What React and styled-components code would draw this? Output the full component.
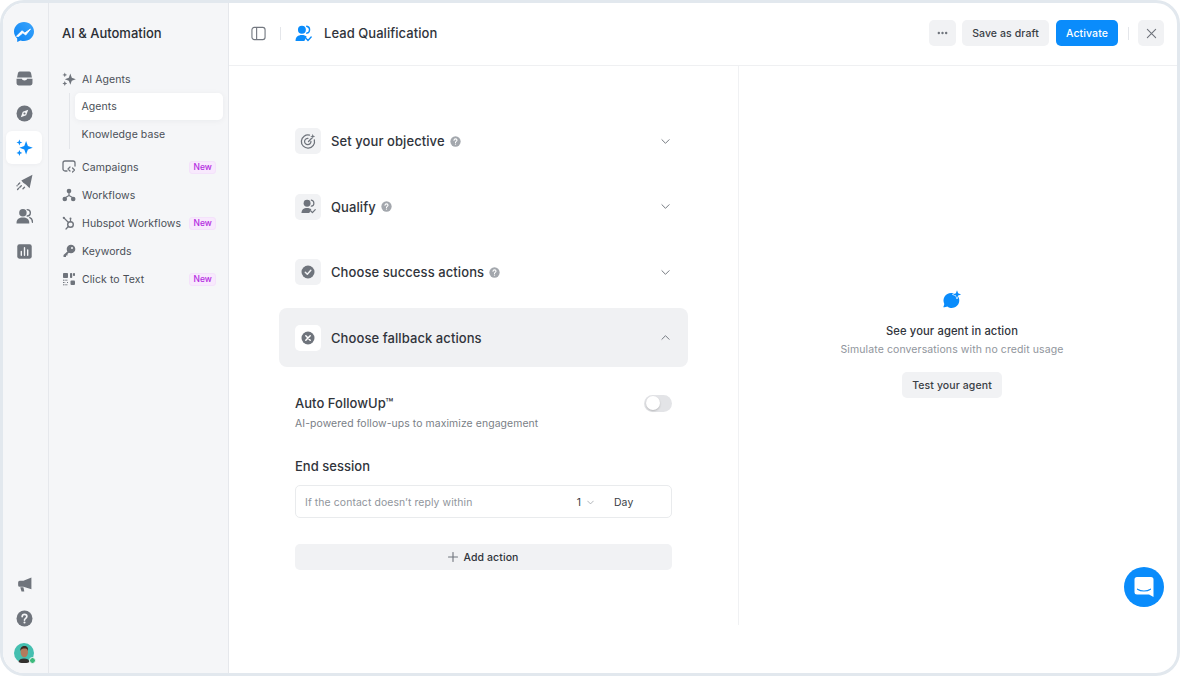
import React from "react";
import styled, { createGlobalStyle } from "styled-components";

const Global = createGlobalStyle`
  html, body { margin: 0; padding: 0; background: #fff; }
  body { font-family: Inter, "Liberation Sans", sans-serif; -webkit-font-smoothing: antialiased; }
  * { box-sizing: border-box; }
`;

const Frame = styled.div`
  position: relative; width: 1180px; height: 676px; display: flex; overflow: hidden;
  border: 3px solid #e2e8ee; border-radius: 24px; background: #fff; color: #23272e;
`;
const Rail = styled.nav`
  width: 46px; flex: none; background: #f5f6f8; border-right: 1px solid #e6e8ec;
  display: flex; flex-direction: column; align-items: center; padding: 19px 3px 10px 0;
`;
const RailLogo = styled.div`display: flex; height: 20px; align-items: center; justify-content: center; margin-bottom: 20px;`;
const RailGroup = styled.div`display: flex; flex-direction: column; gap: 1.5px;`;
const RailSpacer = styled.div`flex: 1;`;
const RailItem = styled.div`
  width: 36px; height: 33px; display: flex; align-items: center; justify-content: center; border-radius: 6px;
  background: ${p => (p.$active ? "#fff" : "transparent")};
  box-shadow: ${p => (p.$active ? "0 1px 4px rgba(20,30,50,.04)" : "none")};
`;
const Avatar = styled.div`position: relative; width: 20px; height: 20px; margin-top: 8px;`;
const Presence = styled.span`
  position: absolute; right: -2px; bottom: -1px; width: 7px; height: 7px; border-radius: 50%;
  background: #3cba7c; border: 1px solid #f5f6f8;
`;
const Sidebar = styled.aside`
  width: 180px; flex: none; background: #f5f6f8; border-right: 1px solid #e6e8ec; padding: 0 5px 0 13px;
`;
const SideTitle = styled.div`height: 62px; display: flex; align-items: center; padding-bottom: 3px; font-size: 13px; font-weight: 500; color: #2a2e35;`;
const NavRow = styled.div`
  height: 28px; display: flex; align-items: center; gap: 6px; font-size: 10.5px; color: #4a4f57; letter-spacing: .08px;
`;
const NavIcon = styled.span`width: 14px; height: 14px; flex: none; display: flex; align-items: center; justify-content: center;`;
const NavLabel = styled.span`flex: 1; white-space: nowrap;`;
const Badge = styled.span`
  margin-right: 7px; height: 13px; padding: 0 3px; border-radius: 3px; background: #f8e9fd; border: 1px solid #f4e2fb;
  color: #b32be0; font-size: 8.5px; font-weight: 500; line-height: 11px;
`;
const SubNav = styled.div`margin: 0 0 4px 6.5px; padding-left: 5px; border-left: 1.5px solid #e4e6ea; display: flex; flex-direction: column;`;
const SubItem = styled.div`
  height: 27px; margin-bottom: 1px; padding-left: 7px; display: flex; align-items: center; font-size: 10.5px; color: #4a4f57; letter-spacing: .08px; border-radius: 5px;
  background: ${p => (p.$active ? "#fff" : "transparent")};
  box-shadow: ${p => (p.$active ? "0 1px 6px rgba(20,30,50,.05)" : "none")};
`;
const Main = styled.main`flex: 1; min-width: 0; display: flex; flex-direction: column;`;
const Header = styled.header`
  height: 63px; flex: none; border-bottom: 1px solid #eff0f2; display: flex; align-items: center; padding: 0 13px 2px 22px;
`;
const Divider = styled.span`width: 1px; height: 13px; background: #e4e6ea; flex: none; margin: ${p => p.$m};`;
const PageTitle = styled.div`font-size: 13px; font-weight: 500; letter-spacing: .05px; margin-left: 12px; flex: 1; color: #30343b;`;
const Button = styled.button`
  height: 26px; border: 0; border-radius: 5px; font: 500 10.5px Inter, sans-serif; letter-spacing: .1px; padding: 0; margin-left: ${p => p.$ml || 0}px; white-space: nowrap;
  display: flex; align-items: center; justify-content: center;
  background: ${p => (p.$primary ? "#0a8cfb" : "#f1f2f4")}; color: ${p => (p.$primary ? "#fff" : "#3a3e45")};
  width: ${p => (p.$w ? p.$w + "px" : "auto")};
`;
const Body = styled.div`flex: 1; display: flex; min-height: 0;`;
const LeftPane = styled.section`
  width: 510px; flex: none; height: 559px; border-right: 1px solid #f0f1f3; padding: 45.5px 50px 0 50px;
`;
const Accordion = styled.div`
  height: 59px; margin-bottom: 6.67px; padding: 0 16px; display: flex; align-items: center; border-radius: 8px;
  background: ${p => (p.$open ? "#f0f1f3" : "transparent")};
`;
const IconTile = styled.span`
  width: 26px; height: 26px; border-radius: 5px; flex: none; display: flex; align-items: center; justify-content: center;
  background: ${p => (p.$open ? "#fff" : "#f1f2f4")};
`;
const AccTitle = styled.span`font-size: 13px; font-weight: 500; letter-spacing: .08px; margin-left: 10px; color: #30343b;`;
const Help = styled.span`display: flex; margin-left: 5px;`;
const Chevron = styled.span`margin-left: auto; display: flex; margin-right: 2px;`;
const Panel = styled.div`padding: 19px 16px 0;`;
const ToggleRow = styled.div`display: flex; justify-content: space-between; align-items: center; height: 20px;`;
const FieldTitle = styled.div`font-size: 13px; font-weight: 500; letter-spacing: .03px; color: #30343b;`;
const Toggle = styled.span`
  position: relative; width: 28px; height: 17px; border-radius: 9px; background: #e3e4e7; display: block;
  &::after { content: ""; position: absolute; left: 1.5px; top: 1.5px; width: 14px; height: 14px; border-radius: 50%; background: #fff; box-shadow: 0 1px 2px rgba(0,0,0,.2); }
`;
const Hint = styled.div`font-size: 10.4px; color: #797e86; letter-spacing: .1px; margin-top: 4px; line-height: 14px;`;
const SectionTitle = styled(FieldTitle)`margin-top: 25px; line-height: 20px;`;
const InputRow = styled.div`
  height: 33px; margin-top: 9px; border: 1px solid #e9ebed; border-radius: 5px; display: flex; align-items: center; padding: 1px 0 0 9px; font-size: 10.4px; letter-spacing: .1px;
`;
const Placeholder = styled.span`flex: 1; color: #90959c;`;
const Count = styled.span`color: #3a3e45; display: flex; align-items: center; gap: 6px; margin-right: 20px;`;
const Unit = styled.span`color: #3a3e45; width: 57px;`;
const AddAction = styled.button`
  width: 100%; height: 26px; margin-top: 26px; border: 0; border-radius: 5px; background: #f1f2f4; display: flex; align-items: center; justify-content: center; gap: 5px;
  font: 500 10.5px Inter, sans-serif; letter-spacing: .1px; color: #30343b;
`;
const RightPane = styled.section`flex: 1; display: flex; flex-direction: column; align-items: center; padding: 224px 12px 0 0;`;
const EmptyTitle = styled.div`font-size: 11.2px; font-weight: 500; letter-spacing: .12px; margin-top: 14px; color: #30343b;`;
const EmptyText = styled.div`font-size: 10.5px; color: #90959c; letter-spacing: .1px; margin-top: 5px;`;
const TestButton = styled(Button)`margin-top: 16px; width: 100px;`;
const ChatBubble = styled.div`
  position: absolute; right: 13px; bottom: 66px; width: 40px; height: 40px; border-radius: 50%; background: #0a8cfb; display: flex; align-items: center; justify-content: center;
`;

const G = "#6f747c";
const Ic = ({ s = 17, children, vb = 16 }) => <svg width={s} height={s} viewBox={`0 0 ${vb} ${vb}`} fill="none">{children}</svg>;

const Sparkles = ({ c = G, s = 16 }) => (
  <Ic s={s}>
    <path d="M9.500 1.800 11.200 6.500 15.800 8.200 11.200 9.900 9.500 14.600 7.800 9.900 3.200 8.200 7.800 6.500Z" fill={c} />
    <path d="M3.200.5 4 2.500 6 3.300 4 4.100 3.200 6.100 2.400 4.100.4 3.300 2.400 2.500ZM3.200 10.300 4 12.300 6 13.100 4 13.900 3.200 15.900 2.400 13.900.4 13.100 2.400 12.300Z" fill={c} />
  </Ic>
);
const Logo = () => (
  <svg width="20" height="20" viewBox="0 0 20 20">
    <defs><linearGradient id="lg" x1="0" y1="1" x2="1" y2="0"><stop offset="0" stopColor="#0a84f5" /><stop offset="1" stopColor="#3ba4fb" /></linearGradient></defs>
    <path d="M10 0C4.500 0 0 4.200 0 9.500c0 2.800 1.200 5.200 3.200 7V20l3.300-1.600c1.100.4 2.300.6 3.500.6 5.500 0 10-4.200 10-9.500S15.500 0 10 0Z" fill="url(#lg)" />
    <path d="M2.500 14.200 8 8.800l2.800 2.200 5.700-4-4.800 6-2.800-2.200-4.400 3.700Z" fill="#fff" stroke="#fff" strokeWidth=".9" strokeLinejoin="round" />
  </svg>
);
const Inbox = () => (
  <Ic>
    <path d="M3.500 1.500h9a1.800 1.800 0 0 1 1.700 1.500L15 7H1l.800-4a1.800 1.800 0 0 1 1.700-1.500Z" fill={G} />
    <path d="M.5 8.300h5c.3 1 1.300 1.600 2.500 1.600s2.200-.6 2.500-1.600h5V12.500a2 2 0 0 1-2 2h-11a2 2 0 0 1-2-2Z" fill={G} />
  </Ic>
);
const Compass = () => (
  <Ic>
    <circle cx="8" cy="8" r="7.500" fill={G} />
    <path d="M11.500 4.500 9.600 9.600 4.500 11.500 6.400 6.400Z" fill="#f5f6f8" />
    <circle cx="8" cy="8" r="1" fill={G} />
  </Ic>
);
const Send = () => (
  <Ic>
    <path d="M15.500.8 12.800 13.500 9.500 10 6.800 8.200 5 6Z" fill={G} />
    <path d="M5 11 1.500 14.500M8 12.500 6 14.500M3.500 8.500 1 11" stroke={G} strokeWidth="1.300" strokeLinecap="round" strokeDasharray="2 1.500" />
  </Ic>
);
const Team = () => (
  <Ic>
    <circle cx="6.500" cy="4.500" r="3.500" fill={G} />
    <path d="M0.500 14c0-3.300 2.500-5 6-5s6 1.700 6 5v.500H.5Z" fill={G} />
    <path d="M10.500 1.500a3 3 0 0 1 0 6M13 9c1.600.6 2.500 2.200 2.500 4.500" stroke={G} strokeWidth="1.300" strokeLinecap="round" />
  </Ic>
);
const Chart = () => (
  <Ic>
    <rect x="1.200" y="1.200" width="13.600" height="13.600" rx="2" fill={G} />
    <path d="M5 11.500V8M8 11.500V4.500M11 11.500V6.500" stroke="#f5f6f8" strokeWidth="1.300" strokeLinecap="round" />
  </Ic>
);
const Megaphone = () => (
  <Ic>
    <path d="M14.500 1.500v11L7 10.200H3.500a1.500 1.500 0 0 1-1.500-1.500V6a1.500 1.500 0 0 1 1.500-1.500H7Z" fill={G} />
    <path d="M4 10.500h3l.8 4H5.200Z" fill={G} />
  </Ic>
);
const HelpBig = ({ s = 17, c = G, bg = "#f5f6f8" }) => (
  <Ic s={s}>
    <circle cx="8" cy="8" r="7.500" fill={c} />
    <path d="M5.800 6.200C5.900 4.900 6.800 4.200 8 4.200c1.300 0 2.200.8 2.200 1.900 0 1.800-2.200 1.700-2.200 3.400" stroke={bg} strokeWidth="1.600" strokeLinecap="round" />
    <circle cx="8" cy="11.800" r="1" fill={bg} />
  </Ic>
);
const Face = () => (
  <svg width="20" height="20" viewBox="0 0 20 20">
    <circle cx="10" cy="10" r="10" fill="#45bfb0" />
    <path d="M4.500 19c.5-2.500 2.500-3.500 5.500-3.500s5 1 5.500 3.500A10 10 0 0 1 10 20a10 10 0 0 1-5.500-1Z" fill="#33302e" />
    <ellipse cx="10.300" cy="9" rx="3.700" ry="5.200" fill="#b27a5c" />
    <path d="M6.400 8C6 4.500 8 3 10.500 3c2.500 0 4 1.500 3.500 5-.5-2-1.500-2.500-3.500-2.500S7 6 6.400 8Z" fill="#3c2a22" />
  </svg>
);
const Campaign = () => (
  <Ic s={14} vb={14}>
    <path d="M5 11H3a2 2 0 0 1-2-2V3a2 2 0 0 1 2-2h8a2 2 0 0 1 2 2v3" stroke={G} strokeWidth="1.300" strokeLinecap="round" />
    <path d="M8 7 6 9l2 2M10.500 8l2 2-2 2" stroke={G} strokeWidth="1.200" strokeLinecap="round" strokeLinejoin="round" />
  </Ic>
);
const Flow = () => (
  <Ic s={14} vb={14}>
    <circle cx="7" cy="3" r="2.300" fill={G} /><circle cx="2.800" cy="11" r="2.300" fill={G} /><circle cx="11.200" cy="11" r="2.300" fill={G} />
    <path d="M7 5v2.500M7 7.500 3.500 9.500M7 7.500l3.500 2" stroke={G} strokeWidth="1.200" />
  </Ic>
);
const Hub = () => (
  <Ic s={14} vb={14}>
    <circle cx="8.500" cy="8.500" r="2.800" stroke={G} strokeWidth="1.400" />
    <path d="M6.500 6.500 2 2M8.500 5.700V3M6.300 10.500 4 13" stroke={G} strokeWidth="1.200" strokeLinecap="round" />
    <circle cx="1.800" cy="1.800" r="1.100" fill={G} /><circle cx="8.500" cy="2.500" r="1" fill={G} />
  </Ic>
);
const Key = () => (
  <Ic s={14} vb={14}>
    <circle cx="9" cy="5" r="4.300" fill={G} />
    <path d="M6.500 6.500 1.500 11v2h2.500v-1.500h1.500V10l2-2Z" fill={G} />
    <circle cx="10" cy="4" r="1" fill="#f5f6f8" />
  </Ic>
);
const Qr = () => (
  <Ic s={14} vb={14}>
    <rect x="1" y="1" width="5" height="5" rx=".8" fill={G} /><rect x="8" y="1" width="2.200" height="5" rx=".8" fill={G} />
    <rect x="11" y="1" width="2" height="3" rx=".8" fill={G} />
    <rect x="8.500" y="8.500" width="4.500" height="4.500" rx="1" fill={G} />
    <path d="M1 8.200h5M1 10.500h2.500M5 10.500h1M1 12.800h5" stroke={G} strokeWidth="1" strokeDasharray="1.500 .8" />
  </Ic>
);
const PanelIcon = () => (
  <Ic s={15}><rect x="1" y="1.500" width="14" height="13" rx="2.500" stroke="#737880" strokeWidth="1.200" /><path d="M6 1.500v13" stroke="#737880" strokeWidth="1.200" /></Ic>
);
const Qualify = ({ c = "#0a8cfb", s = 17 }) => (
  <Ic s={s}>
    <circle cx="6.500" cy="4.500" r="3.700" fill={c} />
    <path d="M.5 15c0-3.500 2.200-5.500 6-5.500 2 0 3.500.6 4.500 1.600L8.800 15Z" fill={c} />
    <path d="M11 1.200a3.300 3.300 0 0 1 0 6.500" stroke={c} strokeWidth="1.300" strokeLinecap="round" />
    <path d="m10.500 12.800 1.700 1.700 3-3.200" stroke={c} strokeWidth="1.300" strokeLinecap="round" strokeLinejoin="round" />
  </Ic>
);
const Target = () => (
  <Ic>
    <path d="M13.500 6.500A6.200 6.200 0 1 1 9 2" stroke={G} strokeWidth="1.200" strokeLinecap="round" />
    <path d="M10.300 8A3 3 0 1 1 7.500 5" stroke={G} strokeWidth="1.200" strokeLinecap="round" />
    <path d="m8 8 3-3" stroke={G} strokeWidth="1.200" strokeLinecap="round" />
    <path d="M12 .8l.6 1.800 1.800.6-1.800.6L12 5.600l-.6-1.800-1.800-.6 1.800-.6Z" fill={G} />
  </Ic>
);
const CheckC = () => (
  <Ic s={14} vb={14}>
    <circle cx="7" cy="7" r="6.500" fill={G} />
    <path d="m4.300 7.200 2 2 3.500-4" stroke="#f1f2f4" strokeWidth="1.500" strokeLinecap="round" strokeLinejoin="round" />
  </Ic>
);
const CrossC = () => (
  <Ic s={14} vb={14}>
    <circle cx="7" cy="7" r="6.500" fill={G} />
    <path d="m4.800 4.800 4.400 4.400M9.200 4.800 4.800 9.200" stroke="#fff" strokeWidth="1.500" strokeLinecap="round" />
  </Ic>
);
const Chev = ({ up, c = "#737880", s = 9, w = 1.100 }) => (
  <svg width={s} height={s} viewBox="0 0 10 10" fill="none"><path d={up ? "M1 7 5 3l4 4" : "M1 3l4 4 4-4"} stroke={c} strokeWidth={w} strokeLinecap="round" strokeLinejoin="round" /></svg>
);
const SmallHelp = () => <Help><HelpBig s={11} c="#a3a7ad" bg="#fff" /></Help>;
const SimBubble = () => (
  <svg width="20" height="20" viewBox="0 0 20 20">
    <path d="M9 3a7.500 7.500 0 0 0-6.800 10.700c.2.700-.4 2.200-.9 3.600 1.600 0 3.200-.3 4-.8A7.500 7.500 0 1 0 9 3Z" fill="#0a8cfb" />
    <path d="M15 .3l1.100 3 3 1.100-3 1.100-1.100 3-1.100-3-3-1.100 3-1.100Z" fill="#0a8cfb" stroke="#fff" strokeWidth="1.200" paintOrder="stroke" strokeLinejoin="round" />
  </svg>
);
const ChatIcon = () => (
  <svg width="20" height="22" viewBox="0 0 20 22">
    <path d="M3 1h14a2.500 2.500 0 0 1 2.500 2.500V21l-4.500-2.500H3A2.500 2.500 0 0 1 .5 16V3.500A2.500 2.500 0 0 1 3 1Z" fill="#fff" />
    <path d="M3.500 13.200c3.500 2.400 9.500 2.400 13 0" stroke="#0a8cfb" strokeWidth="1.200" strokeLinecap="round" fill="none" />
  </svg>
);

export default function App() {
  return (
    <>
      <Global />
      <Frame>
        <Rail>
          <RailLogo><Logo /></RailLogo>
          <RailGroup>
            <RailItem><Inbox /></RailItem>
            <RailItem><Compass /></RailItem>
            <RailItem $active><Sparkles c="#0a8cfb" s={17} /></RailItem>
            <RailItem><Send /></RailItem>
            <RailItem><Team /></RailItem>
            <RailItem><Chart /></RailItem>
          </RailGroup>
          <RailSpacer />
          <RailGroup>
            <RailItem><Megaphone /></RailItem>
            <RailItem><HelpBig /></RailItem>
          </RailGroup>
          <Avatar><Face /><Presence /></Avatar>
        </Rail>
        <Sidebar>
          <SideTitle>AI &amp; Automation</SideTitle>
          <NavRow><NavIcon><Sparkles s={14} /></NavIcon><NavLabel>AI Agents</NavLabel></NavRow>
          <SubNav>
            <SubItem $active>Agents</SubItem>
            <SubItem>Knowledge base</SubItem>
          </SubNav>
          <NavRow><NavIcon><Campaign /></NavIcon><NavLabel>Campaigns</NavLabel><Badge>New</Badge></NavRow>
          <NavRow><NavIcon><Flow /></NavIcon><NavLabel>Workflows</NavLabel></NavRow>
          <NavRow><NavIcon><Hub /></NavIcon><NavLabel>Hubspot Workflows</NavLabel><Badge>New</Badge></NavRow>
          <NavRow><NavIcon><Key /></NavIcon><NavLabel>Keywords</NavLabel></NavRow>
          <NavRow><NavIcon><Qr /></NavIcon><NavLabel>Click to Text</NavLabel><Badge>New</Badge></NavRow>
        </Sidebar>
        <Main>
          <Header>
            <PanelIcon />
            <Divider $m="0 14px 0 14px" />
            <Qualify />
            <PageTitle>Lead Qualification</PageTitle>
            <Button $w={27} aria-label="More">
              <svg width="11" height="4" viewBox="0 0 12 4"><circle cx="2" cy="2" r="1.300" fill={G} /><circle cx="6" cy="2" r="1.300" fill={G} /><circle cx="10" cy="2" r="1.300" fill={G} /></svg>
            </Button>
            <Button $ml={6} $w={87}>Save as draft</Button>
            <Button $ml={7} $w={62} $primary>Activate</Button>
            <Divider $m="0 9.500px" />
            <Button $w={26} aria-label="Close">
              <svg width="11" height="11" viewBox="0 0 12 12"><path d="m1.500 1.500 9 9M10.500 1.500l-9 9" stroke={G} strokeWidth="1.200" strokeLinecap="round" /></svg>
            </Button>
          </Header>
          <Body>
            <LeftPane>
              <Accordion><IconTile><Target /></IconTile><AccTitle>Set your objective</AccTitle><SmallHelp /><Chevron><Chev /></Chevron></Accordion>
              <Accordion><IconTile><Qualify c={G} s={15} /></IconTile><AccTitle>Qualify</AccTitle><SmallHelp /><Chevron><Chev /></Chevron></Accordion>
              <Accordion><IconTile><CheckC /></IconTile><AccTitle>Choose success actions</AccTitle><SmallHelp /><Chevron><Chev /></Chevron></Accordion>
              <Accordion $open><IconTile $open><CrossC /></IconTile><AccTitle>Choose fallback actions</AccTitle><Chevron><Chev up /></Chevron></Accordion>
              <Panel>
                <ToggleRow><FieldTitle>Auto FollowUp™</FieldTitle><Toggle /></ToggleRow>
                <Hint>AI-powered follow-ups to maximize engagement</Hint>
                <SectionTitle>End session</SectionTitle>
                <InputRow>
                  <Placeholder>If the contact doesn’t reply within</Placeholder>
                  <Count>1 <Chev c="#a3a7ad" s={7} w={1.200} /></Count>
                  <Unit>Day</Unit>
                </InputRow>
                <AddAction>
                  <svg width="10" height="10" viewBox="0 0 10 10"><path d="M5 .5v9M.5 5h9" stroke={G} strokeWidth="1.100" strokeLinecap="round" /></svg>
                  Add action
                </AddAction>
              </Panel>
            </LeftPane>
            <RightPane>
              <SimBubble />
              <EmptyTitle>See your agent in action</EmptyTitle>
              <EmptyText>Simulate conversations with no credit usage</EmptyText>
              <TestButton>Test your agent</TestButton>
            </RightPane>
          </Body>
        </Main>
        <ChatBubble><ChatIcon /></ChatBubble>
      </Frame>
    </>
  );
}
